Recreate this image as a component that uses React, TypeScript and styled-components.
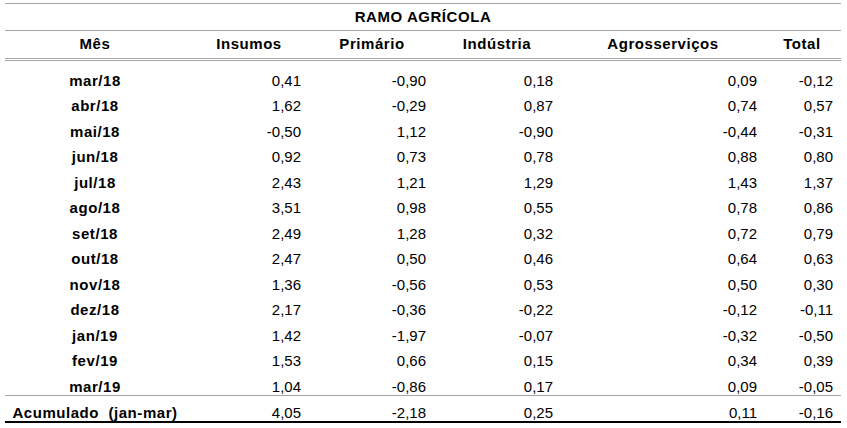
import React from 'react'
import styled, { createGlobalStyle } from 'styled-components'

const GlobalStyle = createGlobalStyle`
	html, body {
		margin: 0;
		padding: 0;
		background: #ffffff;
	}
	body {
		font-family: 'Liberation Sans', Arial, sans-serif;
		color: #000000;
	}
`

const COLS = ['Insumos', 'Primário', 'Indústria', 'Agrosserviços', 'Total']
// right padding of the numbers in each column, as Excel left them
const PAD = [12, 5, 10, 6, 8]

const ROWS: [string, string[]][] = [
	['mar/18', ['0,41', '-0,90', '0,18', '0,09', '-0,12']],
	['abr/18', ['1,62', '-0,29', '0,87', '0,74', '0,57']],
	['mai/18', ['-0,50', '1,12', '-0,90', '-0,44', '-0,31']],
	['jun/18', ['0,92', '0,73', '0,78', '0,88', '0,80']],
	['jul/18', ['2,43', '1,21', '1,29', '1,43', '1,37']],
	['ago/18', ['3,51', '0,98', '0,55', '0,78', '0,86']],
	['set/18', ['2,49', '1,28', '0,32', '0,72', '0,79']],
	['out/18', ['2,47', '0,50', '0,46', '0,64', '0,63']],
	['nov/18', ['1,36', '-0,56', '0,53', '0,50', '0,30']],
	['dez/18', ['2,17', '-0,36', '-0,22', '-0,12', '-0,11']],
	['jan/19', ['1,42', '-1,97', '-0,07', '-0,32', '-0,50']],
	['fev/19', ['1,53', '0,66', '0,15', '0,34', '0,39']],
	['mar/19', ['1,04', '-0,86', '0,17', '0,09', '-0,05']],
]
const TOTAL: [string, string[]] = ['Acumulado  (jan-mar)', ['4,05', '-2,18', '0,25', '0,11', '-0,16']]

export default function App() {
	return (
		<Page>
			<GlobalStyle />
			<Sheet>
				<Title>RAMO AGRÍCOLA</Title>
				<HeadRow>
					<HeadCell>Mês</HeadCell>
					{COLS.map(c => (
						<HeadCell key={c}>{c}</HeadCell>
					))}
				</HeadRow>
				<Body>
					{ROWS.map(([month, vals]) => (
						<Row key={month}>
							<Label>{month}</Label>
							{vals.map((v, i) => (
								<Num key={i} $pad={PAD[i]}>
									{v}
								</Num>
							))}
						</Row>
					))}
				</Body>
				<TotalRow>
					<Label>{TOTAL[0]}</Label>
					{TOTAL[1].map((v, i) => (
						<Num key={i} $pad={PAD[i]}>
							{v}
						</Num>
					))}
				</TotalRow>
			</Sheet>
		</Page>
	)
}

const Page = styled.main`
	width: 847px;
	height: 428px;
	padding: 3px 0 0 5px;
	box-sizing: border-box;
	background: #ffffff;
`
const Sheet = styled.div`
	width: 836px;
	font-size: 15px;
	line-height: 17px;
`
const grid = `
	display: grid;
	grid-template-columns: 180px 128px 118px 132px 200px 78px;
`
const bold = `
	font-weight: bold;
	letter-spacing: 0.55px;
`
const Title = styled.div`
	${bold};
	border-top: 1px solid #a6a6a6;
	padding-top: 3.5px;
	height: 22.5px;
	text-align: center;
`
const HeadRow = styled.div`
	${grid};
	border-top: 1px solid #a6a6a6;
	border-bottom: 3px double #a6a6a6;
	padding-top: 4.4px;
	height: 22.6px;
`
const HeadCell = styled.div`
	${bold};
	text-align: center;
`
const Body = styled.div`
	padding-top: 2.5px;
	border-bottom: 1px solid #a6a6a6;
`
const Row = styled.div`
	${grid};
	height: 25.5px;
	align-items: end;
`
const TotalRow = styled(Row)`
	height: 25px;
	border-bottom: 2px solid #000000;
`
const Label = styled.div`
	${bold};
	text-align: center;
	white-space: pre;
`
const Num = styled.div<{ $pad: number }>`
	text-align: right;
	padding-right: ${p => p.$pad}px;
`
